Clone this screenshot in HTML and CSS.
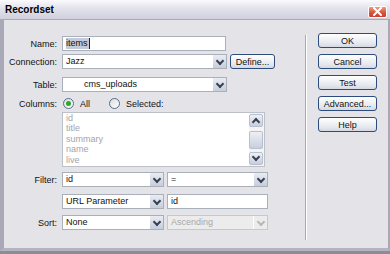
FILE: index.html
```html
<!DOCTYPE html>
<html lang="en">
<head>
    <meta charset="UTF-8">
    <title>Recordset</title>
    <link rel="stylesheet" href="styles.css">
</head>
<body>
    <div class="window">
        <div class="titlebar">
            <span class="title">Recordset</span>
            <span class="close">
                <svg width="13" height="11" viewBox="0 0 13 11"><path d="M3 2 L10 9 M10 2 L3 9" stroke="#fff" stroke-width="2" stroke-linecap="round"/></svg>
            </span>
        </div>

        <div class="content">
            <div class="form">
                <div class="row r-name">
                    <label>Name:</label>
                    <div class="input w-name"><span class="selected">items</span><span class="caret"></span></div>
                </div>

                <div class="row r-conn">
                    <label>Connection:</label>
                    <div class="select w-wide"><span>Jazz</span><i class="arrow"></i></div>
                    <button class="btn define">Define...</button>
                </div>

                <div class="row r-table">
                    <label>Table:</label>
                    <div class="select w-wide"><span class="indent">cms_uploads</span><i class="arrow"></i></div>
                </div>

                <div class="row r-cols">
                    <label>Columns:</label>
                    <span class="radio checked"></span><span class="opt">All</span>
                    <span class="radio"></span><span class="opt">Selected:</span>
                </div>

                <div class="row r-list">
                    <label></label>
                    <div class="listbox">
                        <ul>
                            <li>id</li>
                            <li>title</li>
                            <li>summary</li>
                            <li>name</li>
                            <li>live</li>
                        </ul>
                        <div class="scroll">
                            <i class="sb up"></i>
                            <i class="thumb"></i>
                            <i class="sb down"></i>
                        </div>
                    </div>
                </div>

                <div class="row r-filter">
                    <label>Filter:</label>
                    <div class="select w-half"><span>id</span><i class="arrow"></i></div>
                    <div class="select w-half2"><span>=</span><i class="arrow"></i></div>
                </div>

                <div class="row r-url">
                    <label></label>
                    <div class="select w-half"><span>URL Parameter</span><i class="arrow"></i></div>
                    <div class="input w-half2">id</div>
                </div>

                <div class="row r-sort">
                    <label>Sort:</label>
                    <div class="select w-half"><span>None</span><i class="arrow"></i></div>
                    <div class="select w-half2 disabled"><span>Ascending</span><i class="arrow"></i></div>
                </div>
            </div>

            <div class="separator"></div>

            <div class="buttons">
                <button class="btn">OK</button>
                <button class="btn">Cancel</button>
                <button class="btn">Test</button>
                <button class="btn">Advanced...</button>
                <button class="btn">Help</button>
            </div>
        </div>
    </div>
</body>
</html>
```

FILE: styles.css
```css
* {
    margin: 0;
    padding: 0;
    box-sizing: border-box;
}

body {
    width: 390px;
    height: 254px;
    overflow: hidden;
    background: #8c8c98;
    font-family: "Liberation Sans", Arial, sans-serif;
    font-size: 9px;
    color: #111;
}

.window {
    width: 390px;
    height: 251px;
    background: #e4e4e8;
    border-left: 4px solid #a8a8b6;
    border-right: 2px solid #a8a8b6;
    border-bottom: 3px solid #b4b4c0;
}

/* Barra de título */
.titlebar {
    height: 20px;
    margin-left: -4px;
    margin-right: -2px;
    display: flex;
    align-items: center;
    justify-content: space-between;
    padding: 0 3px 0 5px;
    background: linear-gradient(#fbfbfd 0%, #e6e6ee 35%, #cfd0dc 100%);
    border-bottom: 1px solid #a9aab8;
}

.title {
    font-size: 10px;
    font-weight: bold;
    color: #000;
}

.close {
    width: 19px;
    height: 12px;
    margin-top: 4px;
    border-radius: 2px;
    background: linear-gradient(#f09a80, #d4503a 60%, #c84330);
    border: 1px solid #fff;
    display: flex;
    align-items: center;
    justify-content: center;
}

.content {
    display: flex;
}

/* Formulário */
.form {
    width: 299px;
    padding-top: 16px;
}

.row {
    display: flex;
    align-items: center;
    height: 15px;
}

.row label {
    width: 53px;
    text-align: right;
    margin-right: 5px;
    flex-shrink: 0;
}

.r-conn { margin-top: 3px; }
.r-table { margin-top: 8px; }
.r-cols { margin-top: 5px; height: 13px; }
.r-list { margin-top: 2px; height: 55px; align-items: flex-start; }
.r-filter { margin-top: 5px; }
.r-url { margin-top: 7px; }
.r-sort { margin-top: 6px; }

.input, .select {
    height: 15px;
    background: #fff;
    border: 1px solid #aab0ba;
    padding-left: 3px;
    line-height: 13px;
    white-space: nowrap;
}

.input.w-name {
    width: 164px;
    display: flex;
    align-items: center;
}

.selected {
    background: #c4cad8;
    line-height: 11px;
    padding-right: 1px;
}

.caret {
    width: 1px;
    height: 11px;
    background: #222;
}

.select {
    display: flex;
    justify-content: space-between;
    align-items: center;
}

.select .indent {
    padding-left: 18px;
}

.arrow {
    width: 14px;
    height: 13px;
    background: linear-gradient(#e8ecf4, #c6cedc);
    border-left: 1px solid #fff;
    position: relative;
}

.arrow::after {
    content: "";
    position: absolute;
    left: 4px;
    top: 3px;
    width: 4px;
    height: 4px;
    border-right: 2px solid #3a4050;
    border-bottom: 2px solid #3a4050;
    transform: rotate(45deg);
}

.w-wide { width: 165px; }
.w-half { width: 102px; }
.w-half2 { width: 101px; margin-left: 3px; }

.select.disabled {
    background: #ececec;
    border-color: #c6c8cc;
    color: #a8a8a8;
}

.select.disabled .arrow {
    background: #ececec;
}

.select.disabled .arrow::after {
    border-color: #b8b8b8;
}

/* Botões de opção */
.radio {
    width: 11px;
    height: 11px;
    border-radius: 50%;
    border: 1px solid #50708c;
    background: linear-gradient(135deg, #dcdcdc, #fff);
    margin-left: 1px;
    position: relative;
}

.radio.checked::after {
    content: "";
    position: absolute;
    left: 2px;
    top: 2px;
    width: 5px;
    height: 5px;
    border-radius: 50%;
    background: #2ca82c;
}

.opt {
    margin-left: 6px;
    margin-right: 18px;
}

/* Lista de colunas */
.listbox {
    width: 203px;
    height: 55px;
    background: #fff;
    border: 1px solid #bcc0c8;
    display: flex;
    justify-content: space-between;
}

.listbox ul {
    list-style: none;
    padding: 0 0 0 3px;
    color: #a4a4a8;
    line-height: 10.4px;
}

.scroll {
    width: 15px;
    display: flex;
    flex-direction: column;
    justify-content: space-between;
    padding: 1px 1px 1px 0;
    background: #f4f4f4;
}

.sb, .thumb {
    display: block;
    width: 14px;
    height: 13px;
    background: linear-gradient(#eef0f6, #c8cedc);
    border: 1px solid #b8c0d0;
    border-radius: 2px;
    position: relative;
}

.thumb {
    height: 18px;
}

.sb::after {
    content: "";
    position: absolute;
    left: 3px;
    width: 4px;
    height: 4px;
    border-right: 2px solid #3a4050;
    border-bottom: 2px solid #3a4050;
}

.sb.up::after {
    top: 4px;
    transform: rotate(-135deg);
}

.sb.down::after {
    top: 1px;
    transform: rotate(45deg);
}

/* Separador vertical */
.separator {
    width: 2px;
    margin-top: 15px;
    height: 205px;
    margin-left: 2px;
    border-left: 1px solid #a8a8b0;
    border-right: 1px solid #fff;
}

/* Botões */
.buttons {
    display: flex;
    flex-direction: column;
    gap: 6px;
    padding-top: 13px;
    margin-left: 11px;
}

.btn {
    width: 59px;
    height: 15px;
    font-family: inherit;
    font-size: 9px;
    color: #111;
    background: linear-gradient(#ffffff, #e6e8ee 70%, #d4d8e2);
    border: 1px solid #2c4c7c;
    border-radius: 3px;
}

.btn.define {
    width: 45px;
    margin-left: 3px;
}
```
